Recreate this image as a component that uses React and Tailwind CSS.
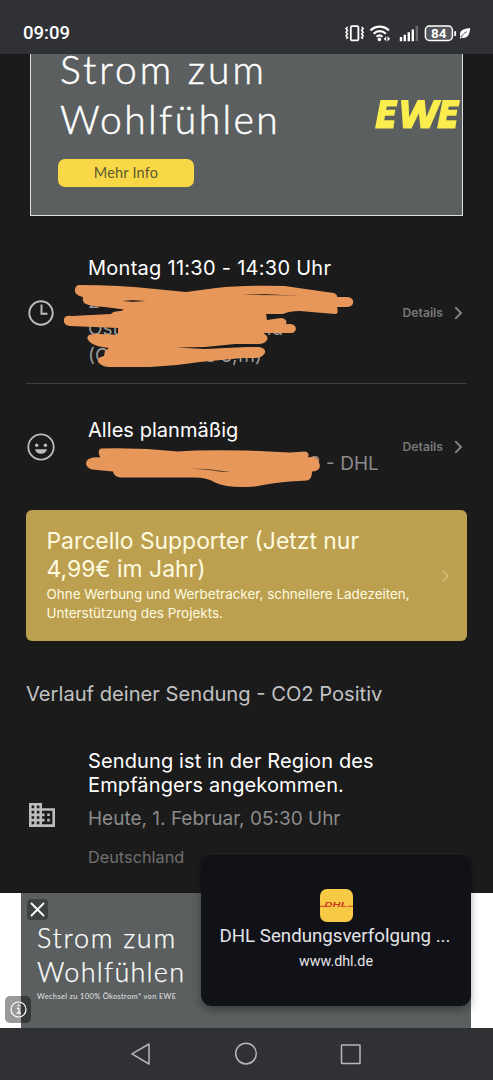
import React from 'react'

const StatusBar = () => {
  return (
    <header className="h-[54px] flex-shrink-0 bg-[#303135] text-white flex justify-between pl-[23px] pr-[21px] pt-[12px]">
      <span className="font-['Roboto'] font-medium text-[18.5px] leading-[43px] h-[42px]">09:09</span>
      <svg width="128" height="20" viewBox="344 24 128 20" fill="none" className="mt-3">
        {/* Vibration */}
        <rect x="350.8" y="26.2" width="7.6" height="14.2" rx="1.2" stroke="#fff" strokeWidth="1.8" />
        <path d="M347.6 27l-1.6 1.6 1.6 1.8-1.6 1.8 1.6 1.8-1.6 1.8 1.6 1.8-1.4 1.2M361.6 27l1.6 1.6-1.6 1.8 1.6 1.8-1.6 1.8 1.6 1.8-1.6 1.8 1.4 1.2" stroke="#fff" strokeWidth="1.5" />
        {/* Wifi */}
        <path d="M370.5 30.4a13 13 0 0 1 18.4 0M373.6 33.7a8.6 8.6 0 0 1 12.2 0M376.5 36.7a4.6 4.6 0 0 1 6 0" stroke="#fff" strokeWidth="2.1" />
        <circle cx="379.4" cy="39.4" r="1.8" fill="#fff" />
        <path d="M386.2 36.2v5l-2.4-2.3 2.4-2.7zM387.5 36.2l2.6 2.6-2.6 2.6z" fill="#fff" />
        {/* Mobile signal */}
        <path d="M401 37v4.2M404.8 34.8v6.4M408.8 32.2v9M412.8 29.4v11.8" stroke="#fff" strokeWidth="2.4" />
        <path d="M416.9 25.8v15.4" stroke="#6b6c70" strokeWidth="2.4" />
        {/* Battery */}
        <rect x="425.4" y="26" width="27" height="14.4" rx="4" fill="#56575b" stroke="#fff" strokeWidth="1.5" />
        <path d="M455.2 31.2v4.8" stroke="#fff" strokeWidth="1.8" />
        <text x="438.8" y="38.2" textAnchor="middle" fill="#fff" fontFamily="Roboto" fontWeight="700" fontSize="13.5">84</text>
        {/* Power saving leaf */}
        <path d="M470.3 28c-5 .6-9.7 1.5-10.3 5.6-.2 1 .1 2 .5 2.8l-.9 1.7 1 .6.9-1.2c1.7.8 4.3.6 6-1.2 1.8-1.9 2.4-5.2 2.8-8.3z" fill="#fff" />
        <path d="M461.2 37c1.2-2.4 3.2-4.1 5.6-5.3" stroke="#303135" strokeWidth=".8" />
      </svg>
    </header>
  )
}

const Chevron = ({ color = '#858585', width = 1.9, height = 14 }) => {
  return (
    <svg height={height} viewBox="0 0 9 14" fill="none" stroke={color} strokeWidth={width}>
      <path d="M1.2 1.2L7 7 1.2 12.8" />
    </svg>
  )
}

const DetailsLink = () => {
  return (
    <button className="flex items-center gap-[11px] text-[12.2px] font-semibold text-[#777777]">
      Details
      <Chevron />
    </button>
  )
}

const ClockIcon = () => (
  <svg width="30" height="30" viewBox="0 0 30 30" fill="none" stroke="#bdbdbd" strokeWidth="1.9">
    <circle cx="15" cy="15" r="11.7" />
    <path d="M15.5 6.5v9.3h6" />
  </svg>
)

const SmileIcon = () => (
  <svg width="30" height="30" viewBox="0 0 30 30" fill="none">
    <circle cx="15" cy="15" r="12.7" stroke="#bdbdbd" strokeWidth="1.8" />
    <circle cx="10.7" cy="13.3" r="1.7" fill="#bdbdbd" />
    <circle cx="19.4" cy="13.3" r="1.7" fill="#bdbdbd" />
    <path d="M9 17.2h12c-.8 3-3.1 4.6-6 4.6s-5.2-1.6-6-4.6z" fill="#bdbdbd" />
  </svg>
)

const BuildingIcon = () => (
  <svg width="26" height="24" viewBox="0 0 26 24" fill="none">
    <path
      fill="#bdbdbd"
      fillRule="evenodd"
      d="M0 0h13v5.200h13V24H0zM2.600 2.600v2.600h2.600V2.600zM7.800 2.600v2.600h2.600V2.600zM2.600 7.800v2.600h2.600V7.800zM7.800 7.800v2.600h2.600V7.800zM2.600 13.200v2.600h2.600v-2.600zM7.800 13.200v2.600h2.600v-2.600zM2.600 18.600v2.600h2.600v-2.600zM7.800 18.600v2.600h2.600v-2.600zM13 7.800v2.600h2.600v2.800H13v2.600h2.600v2.800H13v2.600h10.400V7.800z"
    />
    <path d="M18.2 10.4h2.6v2.6h-2.6zM18.2 15.8h2.6v2.6h-2.6z" fill="#bdbdbd" />
  </svg>
)

const TopAd = () => {
  return (
    <section className="ml-[30px] w-[433px] h-[162px] flex-shrink-0 bg-[#5b5f60] border border-t-0 border-[#dfe1e1] flex justify-between font-['Lato']">
      <div className="pl-[27px]">
        <h2 className="-mt-[10px] ml-[2px] font-light text-[39px] leading-[50px] text-white whitespace-nowrap [-webkit-text-stroke:0.5px_white]">
          <span className="tracking-[3px]">Strom zum</span>
          <br />
          <span className="tracking-[2.4px]">Wohlfühlen</span>
        </h2>
        <button className="mt-[14.5px] w-[136px] h-[28px] rounded-[7px] bg-[#f9d847] text-[#5d5a32] text-[14.5px] tracking-[0.2px]">
          Mehr Info
        </button>
      </div>
      <svg width="87" height="32" viewBox="0 0 87 32" className="mt-[45px]">
        <path
          fill="#fbed4d"
          d="M5.500 1H23l-1.200 6.500h-10l-.7 3.200h9.300l-1.100 6h-9.300l-.7 4.500h10.200L18.400 29.500H0zM26 1h7.400l.8 17.200L42.700 1h7l1.700 17.200L58.700 1h8L54.500 29.500h-9l-1.600-15.200-7.400 15.200h-8.500zM67.600 1H85l-1.200 6.500h-10l-.7 3.200h9.300l-1.100 6H72l-.7 4.500h10.200l-1.200 8.300H62z"
        />
      </svg>
    </section>
  )
}

const DeliveryWindow = () => {
  return (
    <section className="relative h-[168px] flex-shrink-0 mx-[26px] border-b border-[#3e3e3e] flex items-center pr-[4px]">
      <div className="w-[62px] pt-[27px]">
        <ClockIcon />
      </div>
      <div className="self-start pt-[38px] whitespace-nowrap">
        <h3 className="text-[20px] leading-[28px] tracking-[0.27px] text-white">Montag 11:30 - 14:30 Uhr</h3>
        <p className="mt-[6px] text-[19px] leading-[27px] text-[#9a9a9a]">
          2
          <br />
          Ost<span className="ml-[115px]">nland</span>
          <br />
          (O<span className="ml-[96px]">s 5,</span><span className="ml-[1px]">m)</span>
        </p>
      </div>
      <div className="ml-auto pt-[28px]">
        <DetailsLink />
      </div>
      <svg className="absolute left-[34px] top-[64px]" width="300" height="90" viewBox="60 280 300 90">
        <path
          fill="#e8975a"
          d="M79 285Q120 285 155 289L186 292 216 288Q246 285 285 286Q312 290 334 293Q338 295 337 297H348C355 298 355 306 348 307H337Q339 314 335 314L300 311Q289 311 283 314L266 314 267 320 281 318Q288 319 286 324L291 324C298 325 297 333 291 333H263Q269 336 267 340Q265 344 258 344L235 344 205 347 176 347.5 205 349 247 347H259Q266 348 265 353Q262 358 255 358L243 358Q220 360 200 362Q175 366 150 367H110Q102 367 98 362Q97 357 104 356L105 351 109 348Q97 347 91 343Q85 338 89 335Q94 333 118 335L118 328 70 326Q63 325 64 319Q65 315 72 316L111 314Q113 311 121 311L124 309.5 105 307Q90 306 86 304Q82 302 83 297Q74 295 75 289Q76 285 79 285Z"
        />
        <path d="M122 301l10-1 14 1-13 1zM242 295l22-1 35 1.7-18-.4z" fill="#3a2c22" />
      </svg>
    </section>
  )
}

const DeliveryStatus = () => {
  return (
    <section className="relative h-[126px] flex-shrink-0 mx-[26px] flex items-center pr-[4px]">
      <div className="w-[62px]">
        <SmileIcon />
      </div>
      <div className="self-start pt-[32px] whitespace-nowrap">
        <h3 className="text-[20px] leading-[28px] tracking-[0.05px] text-white">Alles planmäßig</h3>
        <p className="mt-[6px] pl-[221px] text-[19px] leading-[27px] text-[#8b8b8b]">8 - DHL</p>
      </div>
      <div className="ml-auto absolute right-[4px] top-[54px]">
        <DetailsLink />
      </div>
      <svg className="absolute left-[54px] top-[60px]" width="250" height="50" viewBox="80 444.5 250 50">
        <path
          fill="#e8975a"
          d="M101 449Q140 448 178 452Q200 450 247 451L290 453 305 452Q310 453 308 458Q315 456 317 459Q321 463 319 469Q317 472 312 472Q312 480 307 481L290 482Q275 483 255 487Q228 489 215 483Q207 478 195 478L120 478Q114 477 113 472L92 470C85 468 84 461 90 459Q94 457 100 458Q97 450 101 449Z"
        />
        <path d="M189 469l18 .5 24 3-10-.3-14-2z" fill="#4d3a2a" />
      </svg>
    </section>
  )
}

const SupporterCard = () => {
  return (
    <section className="mx-[26px] h-[131px] flex-shrink-0 rounded-[6px] bg-[#bca050] flex items-center justify-between pl-[20.5px] pr-[17px] whitespace-nowrap">
      <div className="pb-[2px] text-[#fffbe0]">
        <h3 className="pb-[2px] text-[22.9px] leading-[28px]">
          Parcello Supporter (Jetzt nur
          <br />
          4,99€ im Jahr)
        </h3>
        <p className="text-[13.45px] leading-[19px]">
          Ohne Werbung und Werbetracker, schnellere Ladezeiten,
          <br />
          Unterstützung des Projekts.
        </p>
      </div>
      <Chevron color="#d3bf80" width={1.8} height={12} />
    </section>
  )
}

const History = () => {
  return (
    <section className="mx-[26px] h-[252px] flex-shrink-0 whitespace-nowrap">
      <h2 className="pt-[39px] text-[20.15px] leading-[28px] text-[#c2c2c2]">Verlauf deiner Sendung - CO2 Positiv</h2>
      <div className="flex pt-[41px]">
        <div className="w-[62px] pl-[3px] pt-[54px]">
          <BuildingIcon />
        </div>
        <div>
          <h3 className="text-[20px] leading-[24px] tracking-[0.12px] text-white">
            Sendung ist in der Region des
            <br />
            Empfängers angekommen.
          </h3>
          <p className="mt-[8px] text-[19px] leading-[28px] text-[#8b8b8b]">Heute, 1. Februar, 05:30 Uhr</p>
          <p className="mt-[12px] text-[16.3px] leading-[24px] text-[#707070]">Deutschland</p>
        </div>
      </div>
    </section>
  )
}

const BottomAd = () => {
  return (
    <section className="relative h-[135px] flex-shrink-0 bg-white">
      <div className="ml-[21px] w-[450px] h-full bg-[#5b5f60] pl-[16px] pt-[28px] font-['Lato'] text-white">
        <h2 className="font-light text-[27px] leading-[34px] [-webkit-text-stroke:0.25px_white]">
          <span className="tracking-[1.7px]">Strom zum</span>
          <br />
          <span className="tracking-[1.25px]">Wohlfühlen</span>
        </h2>
        <p className="mt-[2px] text-[7.5px] leading-[12px] tracking-[0.33px] text-[#e3e4e4]">Wechsel zu 100% Ökostrom* von EWE</p>
      </div>
      <button className="absolute left-[27px] top-[6px] size-[21px] rounded-[4px] bg-[#3f4242] flex items-center justify-center">
        <svg width="15" height="15" viewBox="0 0 15 15" stroke="#fff" strokeWidth="1.8" strokeLinecap="round">
          <path d="M1.5 1.5l12 12M13.5 1.5l-12 12" />
        </svg>
      </button>
      <button className="absolute left-[5px] top-[103px] w-[26px] h-[27px] rounded-[5px] bg-black/40 flex items-center justify-center">
        <svg width="17" height="17" viewBox="0 0 17 17" fill="none" stroke="#fff">
          <circle cx="8.5" cy="8.5" r="7.5" strokeWidth="1.2" />
          <path d="M6.8 7.3h2v4.8M6.5 12.1h4.4" strokeWidth="1.3" />
          <circle cx="8.5" cy="4.6" r="1" fill="#fff" stroke="none" />
        </svg>
      </button>
    </section>
  )
}

const LinkPreview = () => {
  return (
    <aside className="absolute left-[201px] top-[853px] w-[270px] h-[153px] rounded-[11px] bg-[#111217] border-t border-[#25262a] shadow-[0_4px_8px_rgba(0,0,0,0.35)] flex flex-col items-center pt-[35px] font-['Roboto'] text-[#e4e4e8] whitespace-nowrap">
      <div className="w-[33px] h-[33px] rounded-[7px] bg-[#f7ca45] overflow-hidden">
        <svg width="33" height="33" viewBox="0 0 33 33" fill="#cf3a20">
          <path d="M0 16.8h5v1H0zM28 16.8h5v1h-5z" />
          <text x="4.5" y="17.8" fontFamily="Liberation Sans" fontWeight="700" fontStyle="italic" fontSize="6.5" textLength="23" lengthAdjust="spacingAndGlyphs">DHL</text>
        </svg>
      </div>
      <h3 className="mt-[1px] pr-[2px] text-[18.7px] leading-[27px]">DHL Sendungsverfolgung ...</h3>
      <p className="text-[14.3px] leading-[22px]">www.dhl.de</p>
    </aside>
  )
}

const NavigationBar = () => {
  return (
    <nav className="h-[52px] flex-shrink-0 bg-[#303135] pt-[14px] pl-[130px]">
      <svg width="232" height="24" viewBox="130 1042 232 24" fill="none" stroke="#b5b6b9" strokeWidth="1.5" strokeLinejoin="round">
        <path d="M132 1053.8L149 1044v20z" />
        <circle cx="246" cy="1053.6" r="10.3" />
        <rect x="341.5" y="1045" width="18.5" height="18.5" rx="0.5" />
      </svg>
    </nav>
  )
}

const App = () => {
  return (
    <div className="relative w-[493px] h-[1080px] overflow-hidden bg-[#1b1b1b] flex flex-col font-['Inter',sans-serif]">
      <StatusBar />
      <TopAd />
      <DeliveryWindow />
      <DeliveryStatus />
      <SupporterCard />
      <History />
      <BottomAd />
      <NavigationBar />
      <LinkPreview />
    </div>
  )
}

export default App
